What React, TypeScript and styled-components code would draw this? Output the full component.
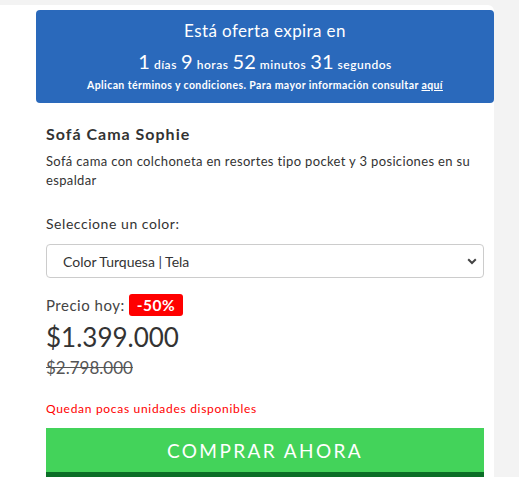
import styled, { createGlobalStyle } from "styled-components";

const GlobalStyle = createGlobalStyle`
	body {
		margin: 0;
		background: #f3f3f3;
		font-family: Lato, "Liberation Sans", sans-serif;
		color: #333;
	}
`

const countdown = [
	{ value: 1, label: "días" },
	{ value: 9, label: "horas" },
	{ value: 52, label: "minutos" },
	{ value: 31, label: "segundos" },
]

export default function App() {
	return (
		<>
			<GlobalStyle />
			<Card>
				<Banner>
					<BannerTitle>Está oferta expira en</BannerTitle>
					<Countdown>
						{countdown.map((item) => (
							<span key={item.label}>
								<Number>{item.value}</Number> <Unit>{item.label}</Unit>{" "}
							</span>
						))}
					</Countdown>
					<Terms>
						Aplican términos y condiciones. Para mayor información consultar <a href="#">aquí</a>
					</Terms>
				</Banner>
				<Content>
					<Title>Sofá Cama Sophie</Title>
					<Description>Sofá cama con colchoneta en resortes tipo pocket y 3 posiciones en su espaldar</Description>
					<Label>Seleccione un color:</Label>
					<SelectWrap>
						<Select defaultValue="turquesa">
							<option value="turquesa">Color Turquesa | Tela</option>
							<option value="gris">Color Gris | Tela</option>
						</Select>
						<Chevron width="10" height="7" viewBox="0 0 10 7">
							<path d="M1.2 1.3 L5 5 L8.8 1.3" fill="none" stroke="#444" strokeWidth="2" />
						</Chevron>
					</SelectWrap>
					<PriceRow>
						Precio hoy: <Badge>-50%</Badge>
					</PriceRow>
					<Price>$1.399.000</Price>
					<OldPrice>$2.798.000</OldPrice>
					<Stock>Quedan pocas unidades disponibles</Stock>
					<BuyButton>COMPRAR AHORA</BuyButton>
				</Content>
			</Card>
		</>
	)
}

const Card = styled.div`
	margin-top: 5px;
	width: 494px;
	background: #fff;
	border-top-right-radius: 6px;
	padding-top: 5px;
	min-height: 480px;
`

const Banner = styled.div`
	margin-left: 36px;
	height: 93px;
	box-sizing: border-box;
	background: #2a69bb;
	border-radius: 4px;
	color: #fff;
	text-align: center;
	padding-top: 9px;
	font-family: Lato, sans-serif;
`

const BannerTitle = styled.div`
	font-size: 17px;
	line-height: 24px;
	letter-spacing: 0.4px;
`

const Countdown = styled.div`
	margin-top: 5px;
	line-height: 26px;
`

const Number = styled.span`
	font-size: 20px;
`

const Unit = styled.span`
	font-size: 12px;
	font-weight: 600;
	letter-spacing: 0.5px;
`

const Terms = styled.div`
	margin-top: 1px;
	font-size: 10.5px;
	font-weight: 700;
	letter-spacing: 0.4px;
	a {
		color: #fff;
	}
`

const Content = styled.div`
	padding: 0 10px 0 46px;
`

const Title = styled.h1`
	margin: 21px 0 0;
	font-size: 16px;
	font-weight: 700;
	letter-spacing: 1px;
	line-height: 20px;
	color: #333;
`

const Description = styled.p`
	margin: 8px 0 0;
	font-size: 13px;
	line-height: 19px;
	letter-spacing: 0.35px;
`

const Label = styled.div`
	margin-top: 24px;
	font-size: 14px;
	line-height: 20px;
	letter-spacing: 0.55px;
`

const SelectWrap = styled.div`
	position: relative;
	margin-top: 10px;
`

const Select = styled.select`
	appearance: none;
	display: block;
	width: 100%;
	height: 34px;
	padding: 0 16px;
	border: 1px solid #ccc;
	border-radius: 4px;
	background: #fff;
	font-family: Lato, sans-serif;
	font-size: 14px;
	color: #333;
`

const Chevron = styled.svg`
	position: absolute;
	right: 7px;
	top: 14px;
	pointer-events: none;
`

const PriceRow = styled.div`
	margin-top: 16px;
	display: flex;
	align-items: center;
	gap: 4px;
	font-size: 15px;
	letter-spacing: 0.5px;
	color: #444;
`

const Badge = styled.span`
	background: #ff0000;
	color: #fff;
	font-weight: 700;
	font-size: 15.5px;
	line-height: 22px;
	padding: 0 8px;
	border-radius: 3px;
`

const Price = styled.div`
	margin-top: 5px;
	font-size: 26px;
	line-height: 32px;
	color: #333;
`

const OldPrice = styled.div`
	margin-top: 3px;
	font-size: 17px;
	line-height: 24px;
	text-decoration: line-through;
	color: #555;
`

const Stock = styled.div`
	margin-top: 21px;
	font-size: 12px;
	line-height: 16px;
	letter-spacing: 0.7px;
	color: #ff0000;
`

const BuyButton = styled.button`
	display: block;
	margin-top: 11px;
	width: 100%;
	height: 49px;
	border: none;
	border-bottom: 5px solid #0b6e27;
	background: #43d35a;
	color: #fff;
	font-family: Lato, sans-serif;
	font-size: 19px;
	letter-spacing: 2.4px;
	cursor: pointer;
`
